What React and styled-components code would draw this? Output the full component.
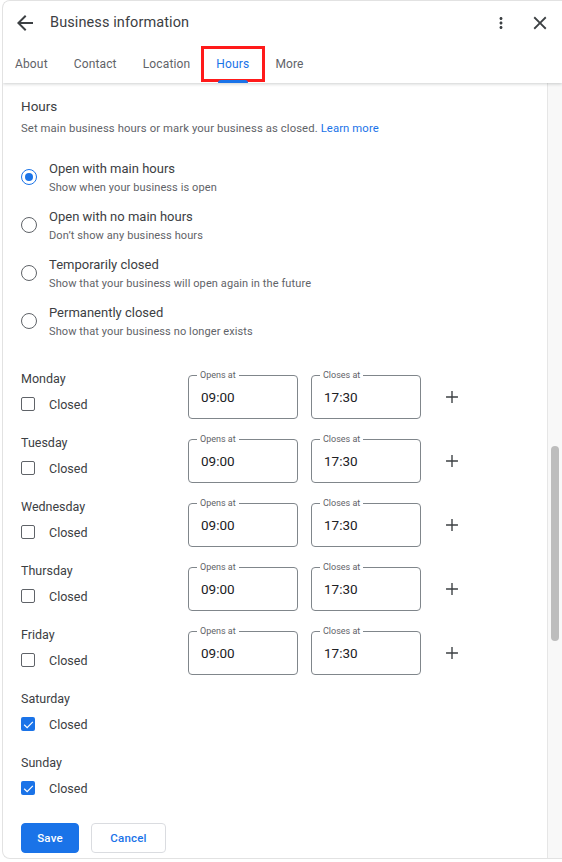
import React from 'react'
import styled, { createGlobalStyle } from 'styled-components'

const GlobalStyle = createGlobalStyle`
  html, body {
    margin: 0;
    padding: 0;
    background: #ffffff;
    font-family: Roboto, "Noto Sans", Arial, sans-serif;
    color: #3c4043;
  }
  * { box-sizing: border-box; }
`

const Card = styled.div`
  margin-left: 2px;
  width: calc(100% - 2px);
  height: 859px;
  border: 1px solid #e2e2e2;
  border-right: none;
  border-radius: 8px 0 0 8px;
  overflow: hidden;
  display: flex;
  flex-direction: column;
  background: #ffffff;
`

const Header = styled.header`
  position: relative;
  z-index: 1;
  box-shadow: 0 1px 3px rgba(60, 64, 67, 0.25);
  background: #ffffff;
`

const TitleRow = styled.div`
  height: 43px;
  display: flex;
  align-items: center;
  padding: 0 11px 0 10px;
`

const IconButton = styled.span`
  display: inline-flex;
  align-items: center;
  justify-content: center;
  width: ${p => p.$size || 24}px;
  height: ${p => p.$size || 24}px;
  color: #3c4043;
  svg { width: 100%; height: 100%; fill: currentColor; }
`

const Title = styled.h1`
  flex: 1;
  margin: 0 0 0 13px;
  font-size: 14.5px;
  font-weight: 400;
  color: #3c4043;
  letter-spacing: 0.1px;
`

const Actions = styled.div`
  display: flex;
  align-items: center;
  gap: 19px;
`

const Tabs = styled.nav`
  height: 39px;
  display: flex;
  align-items: stretch;
`

const Tab = styled.div`
  position: relative;
  display: flex;
  align-items: center;
  padding: 0 13px;
  font-size: 12px;
  font-weight: 400;
  letter-spacing: 0.15px;
  color: ${p => (p.$active ? '#1a73e8' : '#5f6368')};

  &:first-child { padding-left: 12px; }

  ${p => p.$active && `
    &::after {
      content: '';
      position: absolute;
      left: 15px;
      right: 14px;
      bottom: 0;
      height: 3px;
      border-radius: 3px 3px 0 0;
      background: #1a73e8;
    }
  `}
`

const Highlight = styled.span`
  position: absolute;
  top: 2px;
  bottom: 1px;
  left: -2px;
  right: -3px;
  border: 3px solid #ff1a1a;
  pointer-events: none;
`

const Body = styled.div`
  flex: 1;
  display: flex;
  min-height: 0;
`

const Content = styled.main`
  flex: 1;
  padding: 13px 0 0 18px;
`

const Track = styled.div`
  position: relative;
  width: 15px;
  border-left: 1px solid #e6e6e6;
  background: #f8f8f8;
`

const Thumb = styled.div`
  position: absolute;
  left: 3px;
  width: 8px;
  border-radius: 4px;
  background: #bdbdbd;
`

const SectionTitle = styled.h2`
  margin: 0;
  font-size: 13.5px;
  line-height: 20px;
  font-weight: 400;
  color: #3c4043;
`

const Description = styled.p`
  margin: 5px 0 0;
  font-size: 11.3px;
  line-height: 16px;
  color: #5f6368;
  letter-spacing: 0.1px;

  a {
    color: #1a73e8;
    text-decoration: none;
  }
`

const RadioList = styled.div`
  margin-top: 23px;
  display: flex;
  flex-direction: column;
`

const RadioItem = styled.label`
  height: 48px;
  display: flex;
  align-items: flex-start;
`

const RadioCircle = styled.span`
  flex: none;
  margin-top: 9px;
  width: 16px;
  height: 16px;
  border-radius: 50%;
  border: 1.6px solid ${p => (p.$checked ? '#1a73e8' : '#5f6368')};
  display: flex;
  align-items: center;
  justify-content: center;

  &::after {
    content: '';
    width: 8px;
    height: 8px;
    border-radius: 50%;
    background: ${p => (p.$checked ? '#1a73e8' : 'transparent')};
  }
`

const RadioText = styled.span`
  margin-left: 12px;
  display: flex;
  flex-direction: column;
`

const RadioLabel = styled.span`
  font-size: 13px;
  line-height: 18px;
  color: #3c4043;
`

const RadioHint = styled.span`
  font-size: 11px;
  line-height: 20px;
  color: #5f6368;
  letter-spacing: 0.1px;
`

const Days = styled.div`
  margin-top: 17px;
  display: flex;
  flex-direction: column;
`

const DayRow = styled.div`
  height: 64px;
  display: flex;
  align-items: flex-start;
`

const DayInfo = styled.div`
  width: 167px;
  display: flex;
  flex-direction: column;
`

const DayName = styled.span`
  font-size: 12.5px;
  line-height: 20px;
  color: #3c4043;
`

const CheckRow = styled.label`
  margin-top: 5px;
  height: 20px;
  display: flex;
  align-items: center;
  font-size: 12.5px;
  color: #3c4043;
`

const CheckBox = styled.span`
  flex: none;
  width: 14px;
  height: 14px;
  margin-right: 14px;
  border-radius: 2px;
  border: ${p => (p.$checked ? 'none' : '1.6px solid #5f6368')};
  background: ${p => (p.$checked ? '#1a73e8' : 'transparent')};
  display: flex;
  align-items: center;
  justify-content: center;

  svg { width: 13px; height: 13px; }
`

const TimeFields = styled.div`
  margin-top: 6px;
  display: flex;
  align-items: center;
  gap: 13px;
`

const Field = styled.div`
  position: relative;
  width: 110px;
  height: 44px;
  border: 1px solid #80868b;
  border-radius: 4px;
  display: flex;
  align-items: center;
  padding-left: 12px;
  font-size: 13.5px;
  color: #202124;
`

const FieldLabel = styled.span`
  position: absolute;
  top: -7px;
  left: 8px;
  padding: 0 3px;
  background: #ffffff;
  font-size: 9px;
  line-height: 12px;
  color: #5f6368;
`

const AddButton = styled(IconButton)`
  margin-left: 7px;
`

const Buttons = styled.div`
  margin-top: 6px;
  display: flex;
  gap: 12px;
`

const Button = styled.button`
  height: 30px;
  width: ${p => (p.$primary ? 58 : 75)}px;
  padding: 0;
  border-radius: 4px;
  font-family: inherit;
  font-size: 11.5px;
  font-weight: 500;
  letter-spacing: 0.2px;
  border: 1px solid ${p => (p.$primary ? '#1a73e8' : '#dadce0')};
  background: ${p => (p.$primary ? '#1a73e8' : '#ffffff')};
  color: ${p => (p.$primary ? '#ffffff' : '#1a73e8')};
`

const ArrowBack = () => (
  <svg viewBox="0 0 24 24"><path d="M20 11H7.83l5.59-5.59L12 4l-8 8 8 8 1.41-1.41L7.83 13H20v-2z" /></svg>
)
const MoreVert = () => (
  <svg viewBox="0 0 24 24"><path d="M12 8c1.1 0 2-.9 2-2s-.9-2-2-2-2 .9-2 2 .9 2 2 2zm0 2c-1.1 0-2 .9-2 2s.9 2 2 2 2-.9 2-2-.9-2-2-2zm0 6c-1.1 0-2 .9-2 2s.9 2 2 2 2-.9 2-2-.9-2-2-2z" /></svg>
)
const Close = () => (
  <svg viewBox="0 0 24 24"><path d="M19 6.41L17.59 5 12 10.59 6.41 5 5 6.41 10.59 12 5 17.59 6.41 19 12 13.41 17.59 19 19 17.59 13.41 12z" /></svg>
)
const Plus = () => (
  <svg viewBox="0 0 24 24"><path d="M18.5 12.75h-5.75v5.75h-1.5v-5.75H5.5v-1.5h5.75V5.5h1.5v5.75h5.75z" /></svg>
)
const Check = () => (
  <svg viewBox="0 0 24 24" fill="none"><path d="M4 12.5l5.5 5.5L20 7" stroke="#ffffff" strokeWidth="2.2" /></svg>
)

const tabs = ['About', 'Contact', 'Location', 'Hours', 'More']

const options = [
  ['Open with main hours', 'Show when your business is open'],
  ['Open with no main hours', 'Don\u2019t show any business hours'],
  ['Temporarily closed', 'Show that your business will open again in the future'],
  ['Permanently closed', 'Show that your business no longer exists'],
]

const days = [
  { name: 'Monday', closed: false },
  { name: 'Tuesday', closed: false },
  { name: 'Wednesday', closed: false },
  { name: 'Thursday', closed: false },
  { name: 'Friday', closed: false },
  { name: 'Saturday', closed: true },
  { name: 'Sunday', closed: true },
]

export default function App() {
  return (
    <>
      <GlobalStyle />
      <Card>
        <Header>
          <TitleRow>
            <IconButton $size={24}><ArrowBack /></IconButton>
            <Title>Business information</Title>
            <Actions>
              <IconButton $size={18}><MoreVert /></IconButton>
              <IconButton $size={22}><Close /></IconButton>
            </Actions>
          </TitleRow>
          <Tabs>
            {tabs.map(t => (
              <Tab key={t} $active={t === 'Hours'}>
                {t}
                {t === 'Hours' && <Highlight />}
              </Tab>
            ))}
          </Tabs>
        </Header>
        <Body>
          <Content>
            <SectionTitle>Hours</SectionTitle>
            <Description>
              Set main business hours or mark your business as closed. <a href="#">Learn more</a>
            </Description>
            <RadioList>
              {options.map(([label, hint], i) => (
                <RadioItem key={label}>
                  <RadioCircle $checked={i === 0} />
                  <RadioText>
                    <RadioLabel>{label}</RadioLabel>
                    <RadioHint>{hint}</RadioHint>
                  </RadioText>
                </RadioItem>
              ))}
            </RadioList>
            <Days>
              {days.map(d => (
                <DayRow key={d.name}>
                  <DayInfo>
                    <DayName>{d.name}</DayName>
                    <CheckRow>
                      <CheckBox $checked={d.closed}>{d.closed && <Check />}</CheckBox>
                      Closed
                    </CheckRow>
                  </DayInfo>
                  {!d.closed && (
                    <TimeFields>
                      <Field>
                        <FieldLabel>Opens at</FieldLabel>
                        09:00
                      </Field>
                      <Field>
                        <FieldLabel>Closes at</FieldLabel>
                        17:30
                      </Field>
                      <AddButton $size={22}><Plus /></AddButton>
                    </TimeFields>
                  )}
                </DayRow>
              ))}
            </Days>
            <Buttons>
              <Button $primary>Save</Button>
              <Button>Cancel</Button>
            </Buttons>
          </Content>
          <Track>
            <Thumb style={{ top: 363, height: 195 }} />
          </Track>
        </Body>
      </Card>
    </>
  )
}
